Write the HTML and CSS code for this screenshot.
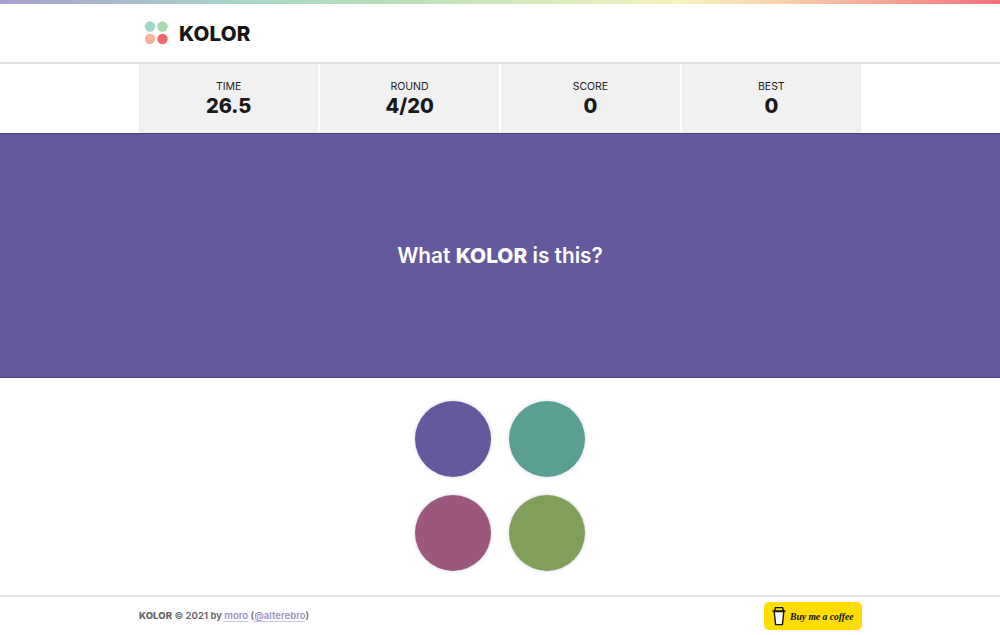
FILE: index.html
```html
<!DOCTYPE html>
<html lang="en">
<head>
<meta charset="utf-8">
<title>KOLOR</title>
<link rel="stylesheet" href="styles.css">
</head>
<body>
<div class="rainbow"></div>
<header class="header">
  <div class="wrap brand">
    <svg class="logo" width="24" height="24" viewBox="0 0 24 24" aria-hidden="true">
      <circle cx="6" cy="5.5" r="5.2" fill="#a3d9c9"/>
      <circle cx="18.5" cy="5.5" r="5.2" fill="#a8dcb0"/>
      <circle cx="6" cy="18" r="5.2" fill="#f7b39b"/>
      <circle cx="18.5" cy="18" r="5.2" fill="#f2686f"/>
    </svg>
    <span class="brand-name">KOLOR</span>
  </div>
</header>
<section class="stats">
  <div class="stat"><div class="stat-label">TIME</div><div class="stat-value">26.5</div></div>
  <div class="stat"><div class="stat-label">ROUND</div><div class="stat-value">4/20</div></div>
  <div class="stat"><div class="stat-label">SCORE</div><div class="stat-value">0</div></div>
  <div class="stat"><div class="stat-label">BEST</div><div class="stat-value">0</div></div>
</section>
<section class="hero">
  <h1 class="question">What <b>KOLOR</b> is this?</h1>
</section>
<section class="choices">
  <button class="choice purple"></button>
  <button class="choice teal"></button>
  <button class="choice plum"></button>
  <button class="choice olive"></button>
</section>
<footer class="footer">
  <div class="wrap footer-row">
    <p class="credits"><b>KOLOR</b> © 2021 by <a href="#">moro</a> (<a href="#">@alterebro</a>)</p>
    <a class="coffee" href="#">
      <svg width="14" height="20" viewBox="0 0 14 20" aria-hidden="true">
        <path d="M2.2 5.5 L3.6 18.6 H10.4 L11.8 5.5 Z" fill="#fff" stroke="#111" stroke-width="1.4" stroke-linejoin="round"/>
        <path d="M1 5 H13 M2.6 5 L3.4 1.6 H10.6 L11.4 5" fill="#ffdd00" stroke="#111" stroke-width="1.4" stroke-linejoin="round" stroke-linecap="round"/>
      </svg>
      <span class="coffee-text">Buy me a coffee</span>
    </a>
  </div>
</footer>
</body>
</html>
```
FILE: styles.css
```css
* { box-sizing: border-box; }
html, body { margin: 0; padding: 0; }
body {
  background: #fff;
  color: #111;
  font-family: Inter, "Noto Sans", "Liberation Sans", sans-serif;
}
.rainbow {
  height: 4px;
  background: linear-gradient(90deg, #a9a0cf 0%, #a8d8c8 25%, #b9e0b8 40%, #f6f3c0 68%, #f7c9a8 80%, #f2707c 100%);
}
.wrap { width: 722px; margin: 0 auto; }
.header {
  height: 60px;
  border-bottom: 2px solid #e2e2e2;
  display: flex;
  align-items: center;
}
.brand { display: flex; align-items: center; gap: 11px; padding-left: 5px; }
.logo { display: block; }
.brand-name { font-size: 20.5px; font-weight: 800; letter-spacing: 0.2px; color: #151515; }
.stats {
  width: 722px;
  height: 69px;
  margin: 0 auto;
  display: grid;
  grid-template-columns: repeat(4, 1fr);
  gap: 1.5px;
  border-bottom: 1px solid #ececf2;
}
.stat {
  background: #f1f1f1;
  text-align: center;
  padding-top: 16px;
}
.stat-label { font-size: 10.5px; line-height: 13px; color: #222; }
.stat-value { font-size: 20px; line-height: 27px; font-weight: 800; color: #1a1a1a; }
.hero {
  height: 245px;
  background: #64599d;
  border-top: 1px solid #4b4280;
  border-bottom: 1px solid #4b4280;
  display: flex;
  align-items: center;
  justify-content: center;
}
.question { margin: 0; font-size: 20.8px; font-weight: 600; color: #fff; }
.question b { font-weight: 800; }
.choices {
  width: 170px;
  margin: 23px auto 0;
  display: grid;
  grid-template-columns: 76px 76px;
  gap: 18px;
  justify-content: space-between;
}
.choice {
  width: 76px;
  height: 76px;
  padding: 0;
  border: 0;
  border-radius: 50%;
  box-shadow: 0 0 3px 1px #e6e4f0;
}
.purple { background: #64599d; }
.teal { background: #5a9f91; }
.plum { background: #9c587c; }
.olive { background: #7f9f5a; }
.footer {
  margin-top: 24px;
  height: 40px;
  border-top: 2px solid #e4e4e4;
}
.footer-row {
  display: flex;
  align-items: center;
  justify-content: space-between;
  height: 38px;
}
.credits { margin: 0 0 2px; font-size: 9.6px; color: #666; font-weight: 600; }
.credits b { font-weight: 800; }
.credits a { color: #9a92c4; text-decoration: none; border-bottom: 1px solid #c9c4e0; }
.coffee {
  width: 98px;
  height: 28px;
  margin-right: -1px;
  padding-left: 8px;
  background: #ffdd00;
  border-radius: 5px;
  display: flex;
  align-items: center;
  gap: 4px;
  text-decoration: none;
}
.coffee-text {
  font-family: "Liberation Serif", serif;
  font-style: italic;
  font-weight: 700;
  font-size: 9.6px;
  color: #111;
  white-space: nowrap;
}
```
